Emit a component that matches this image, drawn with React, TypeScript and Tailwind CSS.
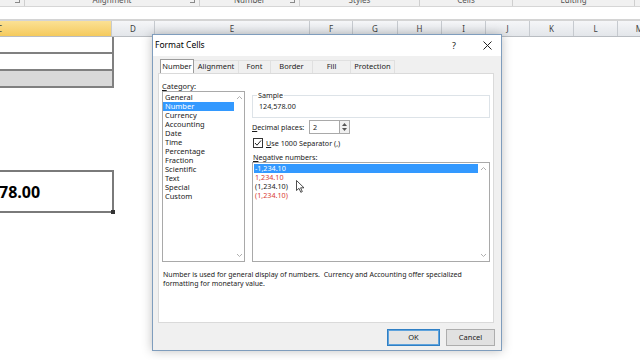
import React from "react";

const F = { fontFamily: '"Noto Sans", "Open Sans", Arial, sans-serif' };

const cols: { l: string; w: number; sel?: boolean }[] = [
  { l: "C", w: 112, sel: true },
  { l: "D", w: 43 },
  { l: "E", w: 155 },
  { l: "F", w: 43 },
  { l: "G", w: 45 },
  { l: "H", w: 44 },
  { l: "I", w: 44 },
  { l: "J", w: 44 },
  { l: "K", w: 44 },
  { l: "L", w: 44 },
  { l: "M", w: 44 },
];

const groups: { label: string; w: number; launcher?: boolean }[] = [
  { label: "", w: 25, launcher: true },
  { label: "Alignment", w: 175, launcher: true },
  { label: "Number", w: 100, launcher: true },
  { label: "Styles", w: 120 },
  { label: "Cells", w: 93 },
  { label: "Editing", w: 122 },
  { label: "", w: 20 },
];

const categories = [
  "General",
  "Number",
  "Currency",
  "Accounting",
  "Date",
  "Time",
  "Percentage",
  "Fraction",
  "Scientific",
  "Text",
  "Special",
  "Custom",
];

function Chevron({ up }: { up?: boolean }) {
  return (
    <svg width="7" height="5" viewBox="0 0 7 5">
      <path
        d={up ? "M1 4 L3.5 1.5 L6 4" : "M1 1 L3.5 3.5 L6 1"}
        fill="none"
        stroke="#b0b0b0"
        strokeWidth="1"
      />
    </svg>
  );
}

function Scrollbar({ w }: { w: number }) {
  return (
    <div
      className="flex flex-col items-center justify-between py-[3px] shrink-0"
      style={{ width: w }}
    >
      <Chevron up />
      <Chevron />
    </div>
  );
}

export default function App() {
  return (
    <div className="relative w-[640px] h-[360px] overflow-hidden bg-white" style={F}>
      {/* Ribbon group label strip */}
      <div className="flex h-[7px] bg-[#f1f1f1] border-b border-[#d6d6d6] overflow-hidden">
        {groups.map((g, i) => (
          <div
            key={i}
            className="relative flex justify-center border-r border-[#cfcfcf] shrink-0"
            style={{ width: g.w }}
          >
            <span className="text-[8px] leading-[8px] text-[#555] -mt-[4px]">{g.label}</span>
            {g.launcher && (
              <span className="absolute right-[4px] -top-[3px] w-[5px] h-[6px] border-r border-b border-[#8a8a8a]" />
            )}
          </div>
        ))}
      </div>
      {/* formula area */}
      <div className="h-[14px] bg-white border-b-2 border-[#d4d4d4]" />
      {/* Column headers */}
      <div className="flex h-[16px] border-b border-[#b9bdc2]">
        {cols.map((c) => (
          <div
            key={c.l}
            className={
              "flex items-center text-[8px] text-[#404040] border-r border-[#c6cacf] shrink-0 " +
              (c.sel
                ? "justify-start bg-gradient-to-b from-[#fbe194] to-[#f5ca5c]"
                : "justify-center bg-gradient-to-b from-[#f5f6f8] to-[#e3e6ea]")
            }
            style={{ width: c.w }}
          >
            <span className={c.sel ? "-ml-[3px]" : ""}>{c.l}</span>
          </div>
        ))}
      </div>
      {/* Sheet body */}
      <div className="flex flex-col w-[114px]">
        <div className="h-[17px] border-b-2 border-r-2 border-[#808080] bg-white" />
        <div className="h-[17px] border-b-2 border-r-2 border-[#808080] bg-white" />
        <div className="h-[17px] border-b-2 border-r-2 border-[#808080] bg-[#d9d9d9]" />
        <div className="h-[82px]" />
        <div className="relative h-[43px] border-2 border-l-0 border-[#7a7a7a] flex items-center">
          <span
            className="text-[16px] font-bold text-black -ml-[1px]"
            style={{ fontFamily: '"Open Sans", "Noto Sans", sans-serif' }}
          >
            78.00
          </span>
          <span className="absolute -right-[3px] -bottom-[3px] w-[4px] h-[4px] bg-[#333]" />
        </div>
      </div>

      {/* Format Cells dialog */}
      <div className="absolute left-[152px] top-[34px] w-[350px] h-[317px] border border-[#7f9dbd] bg-[#f0f0f0] shadow-[0_0_10px_rgba(0,0,0,0.25)] flex flex-col text-[7.2px] text-[#1a1a1a]">
        {/* title bar */}
        <div className="h-[21px] bg-white flex items-center pl-[2px] pr-[9px] shrink-0">
          <span className="text-[8.5px] text-black">Format Cells</span>
          <span className="ml-auto mr-[27px] text-[9px] text-[#222]">?</span>
          <svg width="9" height="9" viewBox="0 0 9 9">
            <path d="M0.5 0.5 L8.5 8.5 M8.5 0.5 L0.5 8.5" stroke="#222" strokeWidth="1" />
          </svg>
        </div>
        {/* body */}
        <div className="flex flex-col pl-[5px] pr-[7px] pt-[3px]">
          {/* tabs */}
          <div className="flex h-[14px] pl-[2px]">
            {[
              ["Number", 34],
              ["Alignment", 45],
              ["Font", 32],
              ["Border", 42],
              ["Fill", 38],
              ["Protection", 44],
            ].map(([t, w], i) => (
              <div
                key={t as string}
                className={
                  "flex items-center justify-center text-[7.5px] shrink-0 " +
                  (i === 0
                    ? "bg-white border border-[#9c9c9c] border-b-0 h-[14px]"
                    : "border border-[#e0e0e0] border-b-0 border-l-0 h-[13px] mt-[1px]")
                }
                style={{ width: w as number }}
              >
                {t}
              </div>
            ))}
          </div>
          {/* panel */}
          <div className="h-[250px] bg-white border border-[#dadada] flex flex-col pl-[3px] pr-[3px] pt-[7px]">
            <div className="flex items-start">
              {/* category column */}
              <div className="flex flex-col w-[83px] shrink-0">
                <div className="h-[10px] leading-[10px] text-[7.5px]">
                  <span className="underline">C</span>ategory:
                </div>
                <div className="h-[171px] border border-[#a9a9a9] flex">
                  <div className="flex-1 flex flex-col pt-[1px]">
                    {categories.map((c, i) => (
                      <div
                        key={c}
                        className={
                          "h-[9px] leading-[9px] pl-[2px] text-[7.5px] " +
                          (i === 1 ? "bg-[#3399ff] text-white" : "")
                        }
                      >
                        {c}
                      </div>
                    ))}
                  </div>
                  <Scrollbar w={10} />
                </div>
              </div>
              {/* right column */}
              <div className="flex flex-col ml-[7px] w-[238px] mt-[10px]">
                <fieldset className="h-[27px] border border-[#dde3e8] px-[6px] m-0">
                  <legend className="px-[1px] -ml-[2px] leading-[9px]">Sample</legend>
                  <div className="leading-[9px] mt-[2px]">124,578.00</div>
                </fieldset>
                <div className="flex items-center h-[14px] mt-[2px]">
                  <span className="w-[57px] shrink-0">
                    <span className="underline">D</span>ecimal places:
                  </span>
                  <div className="w-[31px] h-[14px] border border-[#a9a9a9] bg-white flex items-center pl-[3px]">
                    2
                  </div>
                  <div className="w-[10px] h-[14px] border border-l-0 border-[#a9a9a9] bg-[#f0f0f0] flex flex-col items-center justify-center gap-[2px]">
                    <svg width="5" height="3" viewBox="0 0 5 3">
                      <path d="M0 3 L2.5 0 L5 3Z" fill="#555" />
                    </svg>
                    <svg width="5" height="3" viewBox="0 0 5 3">
                      <path d="M0 0 L2.5 3 L5 0Z" fill="#555" />
                    </svg>
                  </div>
                </div>
                <div className="flex items-center h-[10px] mt-[4px]">
                  <div className="w-[10px] h-[10px] border border-[#333] bg-white flex items-center justify-center ml-[1px]">
                    <svg width="8" height="8" viewBox="0 0 8 8">
                      <path d="M1 4 L3 6.2 L7 1.5" fill="none" stroke="#222" strokeWidth="1" />
                    </svg>
                  </div>
                  <span className="ml-[3px]">
                    <span className="underline">U</span>se 1000 Separator (,)
                  </span>
                </div>
                <div className="h-[10px] leading-[10px] mt-[4px] ml-[1px]">
                  <span className="underline">N</span>egative numbers:
                </div>
                <div className="relative h-[100px] border border-[#a9a9a9] flex">
                  <div className="flex-1 flex flex-col pt-[1px] pl-[1px]">
                    <div className="h-[9px] leading-[9px] pl-[1px] bg-[#3399ff] text-white">
                      -1,234.10
                    </div>
                    <div className="h-[9px] leading-[9px] pl-[1px] text-[#d83a32]">1,234.10</div>
                    <div className="h-[9px] leading-[9px] pl-[1px] text-[#1a1a1a]">(1,234.10)</div>
                    <div className="h-[9px] leading-[9px] pl-[1px] text-[#d83a32]">(1,234.10)</div>
                  </div>
                  <Scrollbar w={11} />
                  {/* mouse cursor */}
                  <svg
                    className="absolute left-[43px] top-[17px]"
                    width="9"
                    height="13"
                    viewBox="0 0 9 13"
                  >
                    <path
                      d="M0.5 0.5 L0.5 10.5 L3 8.3 L4.8 12.3 L6.3 11.6 L4.6 7.8 L8 7.8 Z"
                      fill="white"
                      stroke="#222"
                      strokeWidth="0.8"
                    />
                  </svg>
                </div>
              </div>
            </div>
            <div className="mt-[8px] text-[7px] leading-[9px] pl-[1px] text-[#1a1a1a]">
              Number is used for general display of numbers.&nbsp; Currency and Accounting offer specialized
              <br />
              formatting for monetary value.
            </div>
          </div>
          {/* buttons */}
          <div className="flex justify-end gap-[6px] mt-[6px] -mr-[1px]">
            <div className="w-[53px] h-[17px] border border-[#2f7fc4] bg-[#e5e5e5] flex items-center justify-center text-[7.5px] shadow-[inset_0_0_0_1px_#5fa3dd]">
              OK
            </div>
            <div className="w-[49px] h-[17px] border border-[#adadad] bg-[#e1e1e1] flex items-center justify-center text-[7.5px]">
              Cancel
            </div>
          </div>
        </div>
      </div>
    </div>
  );
}
